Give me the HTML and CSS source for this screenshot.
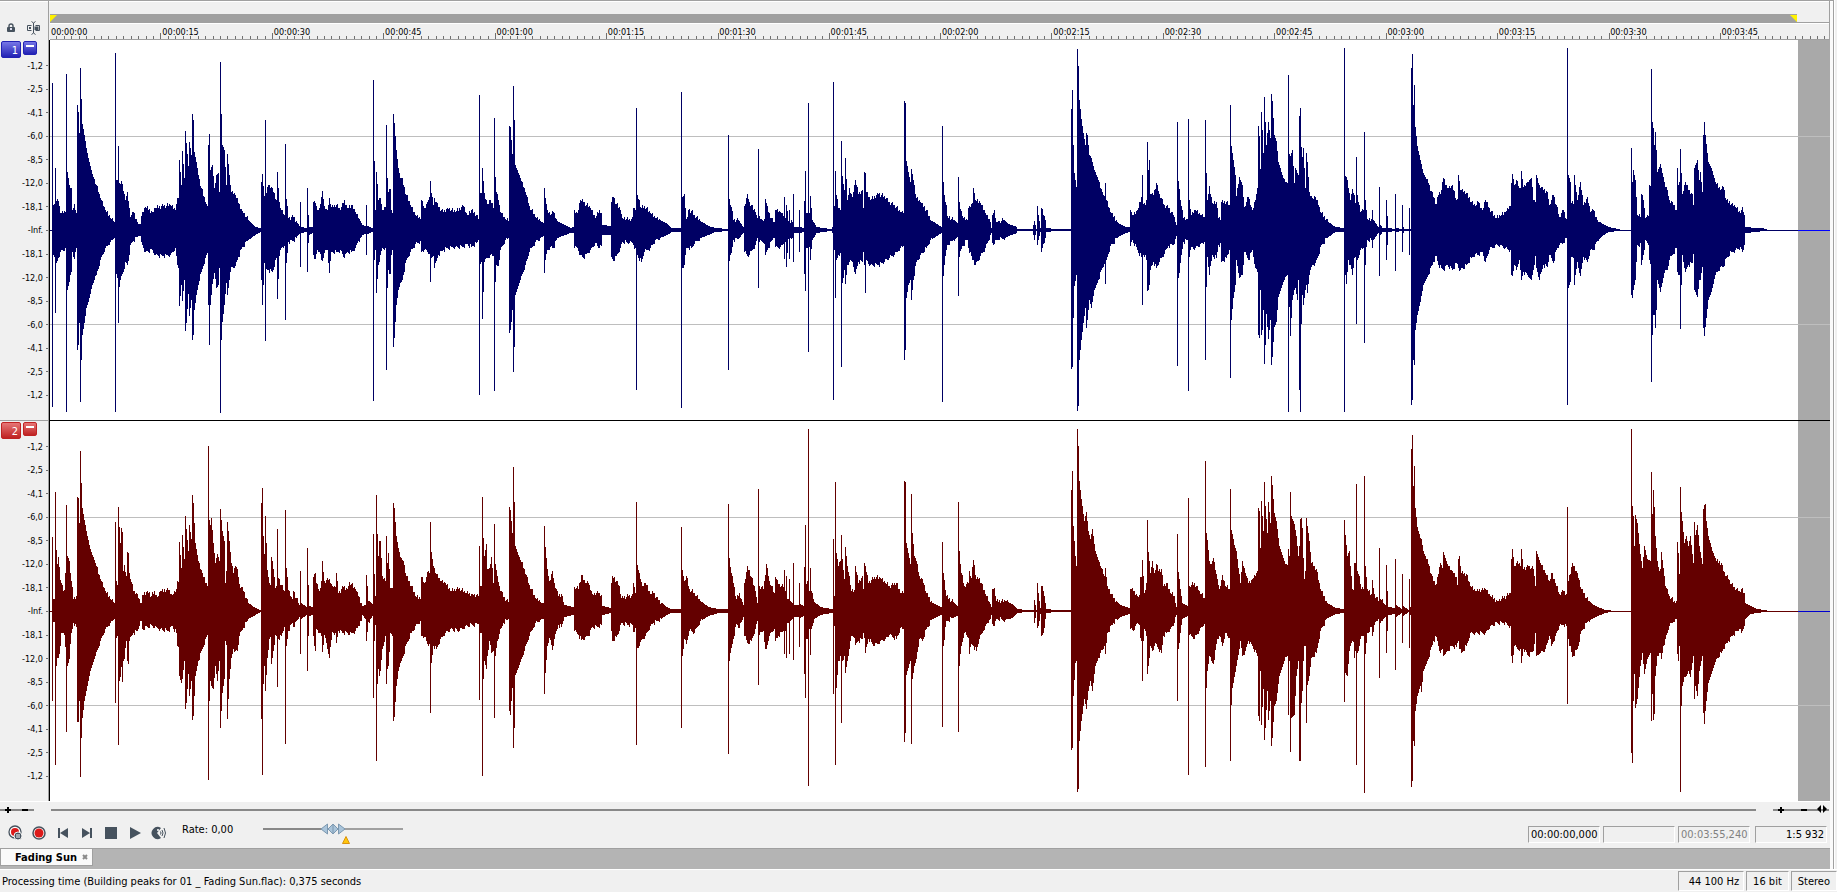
FILE: index.html
```html
<!DOCTYPE html>
<html lang="en">
<head>
    <meta charset="UTF-8">
    <meta name="viewport" content="width=device-width, initial-scale=1.0">
    <title>Fading Sun</title>
    <link rel="stylesheet" href="styles.css">
</head>
<body>
    <div class="workspace">
        <!-- Range bar and time ruler -->
        <div class="header">
            <div class="corner">
                <button class="icon-btn" aria-label="Lock">
                    <svg width="8" height="10" viewBox="0 0 8 10"><path d="M2 5V3a2 2 0 0 1 4 0v2" fill="none" stroke="#46525e" stroke-width="1.4"/><rect y="4" width="8" height="5" rx="1" fill="#46525e"/><rect x="3" y="5" width="2" height="2" fill="#dde"/></svg>
                </button>
                <button class="icon-btn" aria-label="Snapping">
                    <svg width="13" height="14" viewBox="0 0 13 14" fill="none" stroke="#46525e"><path d="M4.500 .500 6.500 2 8.500 .500M6.500 2v10M4.500 13.500 6.500 12 8.500 13.500M4.500 4.500h-4v5h4M8.500 4.500h4v5h-4"/><path d="M3 6v2M8.500 5.500v3.500M10.500 5.500v3.500" stroke-width="2"/></svg>
                </button>
            </div>
            <div class="timeline">
                <div class="range">
                    <div class="range-bar">
                        <svg width="7" height="7"><path d="M0 0h7L0 7z" fill="#fff200"/></svg>
                        <svg width="7" height="7"><path d="M0 0h7v7z" fill="#fff200"/></svg>
                    </div>
                </div>
                <div class="ruler">
                    <div class="ruler-labels">
                        <span>00:00:00</span><span>00:00:15</span><span>00:00:30</span><span>00:00:45</span>
                        <span>00:01:00</span><span>00:01:15</span><span>00:01:30</span><span>00:01:45</span>
                        <span>00:02:00</span><span>00:02:15</span><span>00:02:30</span><span>00:02:45</span>
                        <span>00:03:00</span><span>00:03:15</span><span>00:03:30</span><span>00:03:45</span>
                    </div>
                    <svg class="ticks" viewBox="0 0 1780 7" preserveAspectRatio="none"><path id="ticks"/></svg>
                </div>
            </div>
        </div>

        <!-- Channel 1 -->
        <div class="track left">
            <div class="gutter">
                <div class="badges">
                    <button class="badge">1</button>
                    <button class="badge small" aria-label="Collapse channel 1"></button>
                </div>
                <ol class="scale">
                    <li>-1,2</li><li>-2,5</li><li>-4,1</li><li>-6,0</li><li>-8,5</li><li>-12,0</li><li>-18,1</li>
                    <li>-Inf.</li>
                    <li>-18,1</li><li>-12,0</li><li>-8,5</li><li>-6,0</li><li>-4,1</li><li>-2,5</li><li>-1,2</li>
                </ol>
            </div>
            <div class="wave">
                <svg viewBox="50 -190 1780 380" preserveAspectRatio="none">
                    <rect class="past-end" x="1798" y="-190" width="32" height="380"/>
                    <path class="grid" d="M50-94h1780v1H50zM50 94h1780v1H50z"/>
                    <path class="zero" d="M50 0h1780v1H50z"/>
                    <path class="peaks" id="peaks1"/>
                </svg>
            </div>
        </div>

        <!-- Channel 2 -->
        <div class="track right">
            <div class="gutter">
                <div class="badges">
                    <button class="badge">2</button>
                    <button class="badge small" aria-label="Collapse channel 2"></button>
                </div>
                <ol class="scale">
                    <li>-1,2</li><li>-2,5</li><li>-4,1</li><li>-6,0</li><li>-8,5</li><li>-12,0</li><li>-18,1</li>
                    <li>-Inf.</li>
                    <li>-18,1</li><li>-12,0</li><li>-8,5</li><li>-6,0</li><li>-4,1</li><li>-2,5</li><li>-1,2</li>
                </ol>
            </div>
            <div class="wave">
                <svg viewBox="50 -190 1780 380" preserveAspectRatio="none">
                    <rect class="past-end" x="1798" y="-190" width="32" height="380"/>
                    <path class="grid" d="M50-94h1780v1H50zM50 94h1780v1H50z"/>
                    <path class="zero" d="M50 0h1780v1H50z"/>
                    <path class="peaks" id="peaks2"/>
                </svg>
            </div>
        </div>

        <!-- Zoom and scroll -->
        <div class="zoom-row">
            <div class="zoom">
                <button class="icon-btn" aria-label="Zoom in vertically"><svg width="17" height="10"><path d="M5 5h6M8 2v6" stroke="#000" stroke-width="2"/></svg></button>
                <button class="icon-btn" aria-label="Zoom out vertically"><svg width="17" height="10"><path d="M5 5h6" stroke="#000" stroke-width="2"/></svg></button>
            </div>
            <div class="scroll"></div>
            <div class="zoom">
                <button class="icon-btn" aria-label="Zoom in"><svg width="17" height="10"><path d="M5 5h6M8 2v6" stroke="#000" stroke-width="2"/></svg></button>
                <button class="icon-btn" aria-label="Zoom out"><svg width="27" height="10"><path d="M11 5h6" stroke="#000" stroke-width="2"/></svg></button>
                <button class="icon-btn" aria-label="Zoom to fit"><svg width="12" height="10"><path d="M4 0v8L0 4zM6 0v8l4-4z"/></svg></button>
            </div>
        </div>

        <!-- Transport -->
        <div class="transport">
            <div class="buttons">
                <button class="icon-btn" aria-label="Record with timer"><svg width="16" height="16"><circle cx="8" cy="7" r="6" fill="#fff" stroke="#46525e" stroke-width="1.300"/><circle cx="8" cy="7" r="4" fill="#dc1a1a"/><circle cx="11" cy="11" r="4" fill="#46525e" stroke="#f0f0f0"/><path d="M10 9v4M12 9v4" stroke="#fff"/></svg></button>
                <button class="icon-btn" aria-label="Record"><svg width="16" height="16"><circle cx="8" cy="8" r="6" fill="#fff" stroke="#46525e" stroke-width="1.500"/><circle cx="8" cy="8" r="4.500" fill="#dc1a1a"/></svg></button>
                <button class="icon-btn" aria-label="Go to start"><svg width="16" height="16" fill="#46525e"><path d="M3 3h2v10H3zM13 3v10L5 8z"/></svg></button>
                <button class="icon-btn" aria-label="Go to end"><svg width="16" height="16" fill="#46525e"><path d="M11 3h2v10h-2zM3 3v10l8-5z"/></svg></button>
                <button class="icon-btn" aria-label="Stop"><svg width="16" height="16" fill="#46525e"><path d="M2 2h12v12H2z"/></svg></button>
                <button class="icon-btn" aria-label="Play"><svg width="16" height="16" fill="#46525e"><path d="M3 2v12l11-6z"/></svg></button>
                <button class="icon-btn" aria-label="Scrub"><svg width="16" height="16"><path d="M10 3A6 6 0 1 0 10 13L6 8z" fill="#46525e"/><circle cx="7" cy="5" r="1" fill="#fff"/><path d="M9.500 6.500q1 1.500 0 3M11 5q2 3 0 6M13 3q3 5 0 10" fill="none" stroke="#46525e"/></svg></button>
            </div>
            <label class="rate" for="rate">Rate: 0,00</label>
            <div class="rate-slider">
                <input type="range" id="rate" min="-100" max="100" value="0">
                <svg class="rate-mark" width="8" height="8"><path d="M4 .500 7.500 7.500h-7z" fill="#ffc60a" stroke="#d9930f"/></svg>
            </div>
            <div class="times">
                <output>00:00:00,000</output>
                <output></output>
                <output class="dim">00:03:55,240</output>
                <output class="ratio">1:5 932</output>
            </div>
        </div>

        <div class="tabs">
            <div class="tab">
                <a href="#">Fading Sun</a>
                <button class="icon-btn" aria-label="Close tab"><svg width="6" height="6"><path d="M1 1l4 4M5 1 1 5" stroke="#8a8a8a" stroke-width="2"/></svg></button>
            </div>
        </div>
    </div>

    <div class="status">
        <div class="message">Processing time (Building peaks for 01 _ Fading Sun.flac): 0,375 seconds</div>
        <div class="cell rate-cell">44 100 Hz</div>
        <div class="cell">16 bit</div>
        <div class="cell">Stereo</div>
    </div>

    <script src="script.js"></script>
</body>
</html>
```
FILE: styles.css
```css
* {
    box-sizing: border-box;
}
body {
    margin: 0;
    min-height: 100vh;
    display: flex;
    flex-direction: column;
    background-color: #f0f0f0;
    color: #000;
    font-family: "DejaVu Sans Condensed", "Noto Sans", sans-serif;
    font-size: 11px;
}
button {
    font: inherit;
    color: inherit;
    cursor: pointer;
}
svg {
    display: block;
}
.icon-btn {
    padding: 0;
    border: none;
    background: none;
}
.workspace {
    flex: 1;
    display: flex;
    flex-direction: column;
    margin-right: 3px;
    padding-right: 3px;
    border-right: 1px solid #a0a0a0;
    border-top: 1px solid #a0a0a0;
    box-shadow: inset 0 1px #fff, 1px 0 #fff, inset -3px 0 #fafafa;
}

/* header */
.header {
    display: flex;
    height: 39px;
    flex: none;
}
.corner {
    width: 49px;
    flex: none;
    display: flex;
    align-items: center;
    justify-content: space-between;
    padding: 14px 8px 0 7px;
    border-right: 1px solid #a0a0a0;
}
.timeline {
    flex: 1;
    padding-left: 1px;
    border-right: 1px solid #a0a0a0;
}
.range {
    height: 22px;
    padding-top: 13px;
    border-bottom: 1px solid #a0a0a0;
}
.range-bar {
    display: flex;
    justify-content: space-between;
    width: 98.2%;
    height: 9px;
    padding-top: 1px;
    background-color: #a0a0a0;
}
.ruler {
    display: flex;
    flex-direction: column;
    justify-content: space-between;
    height: 17px;
    border-top: 1px solid #fff;
}
.ruler-labels {
    display: grid;
    grid-template-columns: repeat(15, 150fr) 146fr;
    height: 9px;
    font-size: 9px;
    line-height: 17px;
}
.ruler-labels span {
    padding-left: 1px;
}
.ticks {
    width: 100%;
    height: 7px;
    fill: #707070;
    border-bottom: 1px solid #a0a0a0;
    shape-rendering: crispEdges;
}

/* tracks */
.track {
    flex: 1;
    display: flex;
    min-height: 200px;
}
.track + .track .gutter {
    border-top: 1px solid #a0a0a0;
}
.track + .track .wave {
    border-top: 1px solid #000;
}
.left {
    --peaks: #000064;
    --zero: #0000ff;
    --light: #7676e6;
    --dark: #2222b4;
}
.right {
    --peaks: #640000;
    --zero: #0000d0;
    --light: #e67676;
    --dark: #bf2222;
}
.gutter {
    position: relative;
    width: 49px;
    flex: none;
    border-right: 1px solid #a0a0a0;
}
.badges {
    position: absolute;
    top: 1px;
    left: 1px;
    display: flex;
    align-items: flex-start;
    gap: 2px;
}
.badge {
    width: 20px;
    height: 17px;
    padding: 0 2px 0 0;
    text-align: right;
    line-height: 17px;
    color: #fff;
    background: linear-gradient(var(--light), var(--dark));
    border: 1px solid var(--dark);
    border-radius: 2px;
}
.badge.small {
    width: 14px;
    height: 14px;
    padding: 0;
}
.badge.small::before {
    content: "";
    display: block;
    width: 8px;
    height: 2px;
    margin: 0 auto 5px;
    background-color: #fff;
}
.scale {
    display: flex;
    flex-direction: column;
    height: 100%;
    margin: 0;
    padding: 14px 0 13px;
    list-style: none;
    font-size: 9px;
}
.scale li {
    flex: 1;
    display: flex;
    align-items: center;
    justify-content: flex-end;
    gap: 3px;
}
.scale li::after {
    content: "";
    width: 2px;
    height: 1px;
    background-color: #707070;
}
.wave {
    flex: 1;
    position: relative;
    background-color: #fff;
    border-left: 1px solid #000;
}
.wave svg {
    position: absolute;
    width: 100%;
    height: 100%;
    shape-rendering: crispEdges;
}
.past-end {
    fill: #a9a9a9;
}
.grid {
    fill: #bebebe;
}
.zero {
    fill: var(--zero);
}
.peaks {
    fill: var(--peaks);
}

/* zoom and scroll */
.zoom-row {
    display: flex;
    align-items: center;
    height: 17px;
    flex: none;
    padding-right: 1px;
    border-top: 1px solid #fff;
}
.zoom {
    display: flex;
    background: linear-gradient(#888, #888) center / 100% 2px no-repeat;
}
.scroll {
    flex: 1;
    height: 2px;
    margin: 0 17px;
    background-color: #888;
}

/* transport */
.transport {
    display: flex;
    height: 30px;
    flex: none;
    padding: 0 3px 0 7px;
}
.buttons {
    display: flex;
    gap: 8px;
    padding-top: 7px;
    align-items: flex-start;
}
.rate {
    width: 81px;
    margin-left: 15px;
    padding-top: 5px;
}
.rate-slider {
    position: relative;
    width: 140px;
    height: 20px;
}
.rate-slider input {
    appearance: none;
    display: block;
    width: 100%;
    height: 12px;
    margin: 5px 0 0;
    background: linear-gradient(90deg, #888 50%, #a0a0a0 50%) center / 100% 2px no-repeat;
}
.rate-slider input::-webkit-slider-thumb {
    appearance: none;
    width: 26px;
    height: 12px;
    background: url("data:image/svg+xml,%3Csvg xmlns='http://www.w3.org/2000/svg' width='26' height='12' fill='%23a9c4da' stroke='%237c98b0'%3E%3Cpath d='M7.500 1v10L1 6zM18.500 1v10L25 6zM13 1 8 6l5 5 5-5zM13 1v10'/%3E%3C/svg%3E");
}
.rate-mark {
    position: absolute;
    left: 79px;
    top: 18px;
}
.times {
    display: flex;
    gap: 3px;
    margin-left: auto;
    padding-top: 8px;
}
.times output {
    width: 72px;
    height: 17px;
    padding: 0 2px;
    line-height: 16px;
    border: 1px solid;
    border-color: #a0a0a0 #fff #fff #a0a0a0;
}
.times .dim {
    color: #808080;
}
.times .ratio {
    margin-left: 2px;
    text-align: right;
}

/* tabs */
.tabs {
    display: flex;
    height: 21px;
    flex: none;
    padding-bottom: 2px;
    background-color: #b4b4b4;
    border-top: 1px solid #a0a0a0;
}
.tab {
    display: flex;
    align-items: center;
    gap: 5px;
    height: 17px;
    padding: 0 4px 0 14px;
    background-color: #fafafa;
    border: 1px solid #a0a0a0;
    border-top: none;
}
.tab a {
    color: #000;
    font-weight: bold;
    text-decoration: none;
}

/* status bar */
.status {
    display: flex;
    gap: 2px;
    height: 23px;
    flex: none;
    padding: 1px 0;
    border-top: 1px solid #fff;
}
.message {
    flex: 1;
    padding-left: 2px;
    line-height: 22px;
}
.cell {
    min-width: 42px;
    padding: 0 6px;
    line-height: 20px;
    border: 1px solid;
    border-color: #a0a0a0 #fff #fff #a0a0a0;
}
.rate-cell {
    width: 66px;
    padding: 0 4px;
    text-align: right;
}
```
FILE: script.js
```js
// peak envelopes: x:up/down
const channel1 = `52:147/177 53:25/25 55:62/83 56:29/33 58:29/28 60:17/22 65:18/18 66:156/182 67:58/60 69:45/52 71:42/42 72:20/22 74:26/29 76:17/18 77:125/120
78:118/115 79:97/93 80:162/172 81:131/130 82:106/105 84:95/93 86:82/78 88:72/72 92:56/55 96:45/45 100:32/30 105:20/18 110:12/12 114:8/8
115:177/182 116:50/44 117:50/48 118:84/93 119:47/57 121:49/46 123:39/42 125:30/32 127:38/35 129:22/25 130:13/15 133:18/11 138:6/6 141:14/12
145:23/22 152:18/20 155:22/25 163:24/26 170:25/25 175:20/18 177:32/35 178:32/38 179:70/76 181:45/55 182:79/71 184:52/50 185:99/101 186:87/93
188:64/64 189:88/86 191:75/70 192:116/110 193:110/105 194:78/80 196:68/65 198:55/55 201:42/42 205:28/28 207:24/23 208:85/75 209:96/115
210:60/75 212:65/54 214:42/43 216:55/58 218:57/55 219:38/38 220:168/183 221:116/110 222:85/92 224:80/75 226:45/53 227:76/65 229:55/50
231:38/37 235:35/36 238:27/27 242:19/17 248:10/10 255:3/5 260:2/2 261:48/50 262:56/75 264:34/33 265:110/111 266:37/39 268:45/40 272:42/42
276:30/28 277:58/69 279:28/26 281:20/18 284:15/16 285:86/90 286:31/33 288:12/12 293:13/11 299:4/4 300:28/37 301:3/3 306:2/2 307:42/42
308:15/13 309:3/5 312:3/3 313:28/25 315:27/29 317:20/20 319:22/22 321:33/30 322:39/31 324:24/23 327:20/20 329:32/43 331:23/22 336:25/22
340:20/20 344:30/28 347:22/22 351:25/22 355:18/18 358:12/11 362:5/5 365:4/4 366:25/25 367:4/4 372:2/2 373:150/171 374:69/30 375:20/20
376:58/63 378:30/35 380:32/25 382:20/18 385:23/18 386:105/140 387:52/58 388:38/40 390:41/44 391:20/25 392:17/20 393:116/117 394:107/108
396:80/75 398:62/60 400:52/53 402:52/50 403:45/45 406:35/30 410:25/22 415:15/14 420:11/11 421:30/22 424:22/20 427:28/22 429:33/24 430:49/52
431:37/28 433:25/26 434:32/38 438:23/25 443:18/20 447:22/18 455:18/17 463:24/17 467:15/14 471:20/17 476:15/13 478:11/10 479:135/165
480:37/34 481:37/32 482:62/89 484:37/32 487:26/28 490:30/25 493:22/26 494:112/161 495:53/52 496:38/35 498:30/36 500:18/20 505:11/10 508:9/8
509:104/103 510:103/100 511:90/92 512:76/80 513:144/142 514:110/117 515:65/65 520:52/50 525:38/35 529:24/22 535:13/12 541:8/7 543:7/6
544:42/43 545:32/30 547:20/20 550:15/17 553:18/18 557:9/8 562:6/6 570:2/3 573:3/3 574:20/18 577:17/18 580:30/25 583:28/28 590:22/20
595:12/13 599:20/18 601:17/16 602:5/5 610:4/5 611:28/27 613:33/31 616:26/26 620:20/18 622:12/12 629:11/13 633:22/15 635:20/18 636:122/160
637:35/25 641:22/32 644:24/22 650:17/18 655:12/10 660:10/8 667:6/5 671:2/2 680:2/2 681:138/178 682:33/38 684:36/35 686:11/18 688:20/18
691:19/18 694:15/14 700:9/8 708:4/5 715:2/2 727:1/1 728:95/140 729:31/31 731:23/23 733:10/10 738:10/9 743:3/3 744:24/22 747:36/26 749:28/25
755:18/15 757:12/8 758:81/58 759:14/12 762:10/12 765:31/25 768:18/18 773:8/8 775:20/17 780:18/17 783:14/14 784:33/29 785:12/12 786:25/37
788:9/9 789:20/29 790:7/8 791:10/9 792:8/8 793:36/32 794:3/3 798:3/3 799:20/22 800:3/3 803:2/2 804:29/44 805:59/61 806:17/18 807:17/18
808:127/122 809:17/17 810:34/30 812:10/10 816:3/3 822:2/2 831:1/1 832:3/3 833:148/170 834:24/20 835:59/68 836:35/30 838:22/25 840:20/23
841:89/137 842:54/53 844:40/40 845:72/54 847:30/35 849:42/32 852:33/32 855:50/44 858:36/32 862:40/32 863:22/22 864:58/35 865:57/63
866:38/30 870:30/35 878:36/35 884:34/32 889:28/28 894:25/25 900:18/18 903:17/16 904:129/130 905:127/120 906:69/68 908:58/55 910:48/50
911:61/70 913:50/50 916:32/32 920:28/25 926:20/18 930:10/10 935:7/7 941:3/3 942:104/172 943:48/46 944:35/35 946:25/20 947:14/15 953:10/10
957:7/7 958:53/66 959:28/27 962:14/16 967:10/10 968:22/18 972:27/30 973:42/30 975:30/35 980:27/26 985:17/18 990:8/5 991:2/3 992:15/13
994:20/14 996:8/10 1003:10/9 1010:5/5 1015:4/4 1017:1/1 1032:1/1 1033:5/5 1034:9/10 1035:5/5 1036:1/1 1037:24/15 1038:15/10 1040:2/2
1041:22/22 1043:15/14 1045:10/8 1046:2/2 1055:1/1 1070:1/1 1071:121/139 1072:140/137 1073:85/88 1074:57/56 1076:43/45 1077:181/181
1078:164/176 1079:130/130 1081:111/110 1083:97/93 1085:85/78 1086:97/98 1087:95/90 1089:75/70 1091:72/78 1094:60/60 1098:50/50 1102:38/38
1104:34/34 1105:47/54 1106:30/30 1110:18/16 1118:7/7 1125:3/3 1129:3/2 1130:20/16 1132:15/10 1137:20/20 1141:33/27 1142:55/75 1143:26/25
1145:25/25 1146:30/30 1147:88/61 1148:60/60 1149:70/55 1150:36/40 1153:35/32 1156:47/38 1159:36/32 1164:25/24 1168:22/16 1173:15/15
1176:5/6 1177:108/136 1178:49/48 1180:30/33 1183:12/12 1187:11/10 1188:111/161 1189:30/27 1191:15/17 1195:20/18 1200:15/14 1204:13/12
1205:110/130 1206:57/57 1207:30/27 1209:44/45 1212:27/25 1216:28/28 1218:12/15 1221:28/32 1226:28/28 1229:25/20 1230:125/148 1231:84/90
1233:70/68 1235:55/55 1236:34/30 1239:53/48 1242:45/45 1244:23/22 1248:33/30 1252:20/20 1255:30/38 1257:42/42 1258:104/105 1259:94/108
1260:61/60 1261:118/105 1262:100/100 1263:77/80 1264:133/134 1265:108/115 1266:85/84 1268:108/109 1270:92/90 1271:136/135 1272:129/127
1274:95/97 1276:89/92 1278:68/67 1283:52/52 1287:47/45 1288:155/182 1289:76/77 1290:74/106 1292:80/70 1294:47/60 1295:62/58 1297:57/70
1298:55/50 1299:114/160 1300:122/182 1301:83/94 1302:73/65 1303:82/75 1305:42/60 1306:77/55 1307:68/63 1309:38/45 1312:32/35 1315:33/33
1318:25/26 1321:17/15 1328:8/7 1335:3/2 1343:2/2 1344:182/182 1345:54/45 1346:53/54 1348:42/30 1350:30/35 1352:41/45 1354:35/28 1355:27/27
1356:73/94 1357:35/30 1360:18/20 1363:20/18 1364:98/113 1365:30/35 1366:20/17 1367:11/10 1371:11/10 1372:20/18 1373:10/10 1378:3/3
1379:43/46 1380:5/5 1382:2/2 1385:2/2 1386:30/30 1387:14/15 1388:2/2 1394:1/1 1395:36/41 1396:2/2 1401:1/1 1402:25/22 1403:3/3 1404:1/1
1408:1/1 1409:22/25 1410:1/1 1411:162/175 1412:176/170 1413:125/130 1414:145/135 1415:103/100 1417:84/85 1420:70/72 1423:57/55 1428:47/45
1433:33/32 1436:26/26 1438:35/35 1441:40/38 1443:52/40 1447:42/35 1452:45/40 1456:30/33 1457:31/34 1458:55/38 1460:40/40 1466:37/35
1471:28/28 1475:24/24 1478:28/25 1482:20/22 1485:30/32 1489:22/20 1495:12/15 1500:14/15 1505:18/18 1510:24/20 1511:47/45 1512:56/46
1514:45/35 1516:50/40 1519:42/30 1520:42/40 1521:59/50 1523:43/42 1527:48/45 1531:52/50 1533:30/40 1535:28/26 1536:55/38 1539:45/50
1543:40/35 1547:38/37 1549:25/25 1553:35/33 1556:25/20 1559:13/15 1563:20/13 1566:11/8 1567:182/175 1568:55/58 1570:48/52 1571:27/27
1574:55/55 1577:30/32 1580:48/46 1583:25/27 1587:33/32 1590:18/20 1593:20/20 1597:10/11 1602:6/6 1608:3/2 1618:1/1 1620:0/0 1630:0/0
1631:82/65 1632:48/68 1633:60/60 1635:50/50 1637:15/15 1641:36/35 1643:30/25 1645:12/10 1648:14/15 1649:45/30 1650:44/34 1651:161/152
1652:108/105 1653:102/85 1654:85/85 1655:98/98 1656:80/80 1657:58/50 1660:66/62 1664:48/43 1667:40/40 1669:30/30 1672:28/25 1676:20/18
1677:62/42 1678:45/45 1679:48/45 1680:81/99 1681:57/55 1682:36/25 1685:48/42 1688:40/35 1692:36/33 1693:25/24 1694:62/60 1697:70/67
1699:50/50 1700:58/50 1702:38/37 1703:95/98 1704:108/106 1705:95/97 1708:68/70 1711:62/62 1715:48/45 1720:40/37 1723:43/37 1726:30/28
1731:26/22 1735:23/20 1740:17/17 1742:23/22 1744:15/15 1745:3/3 1755:2/2 1763:2/1 1764:1/1 1768:0/0 1797:0/0`;

const channel2 = `52:74/90 53:12/11 54:12/11 55:119/154 56:61/55 57:47/47 58:54/47 60:31/35 61:28/22 63:20/22 65:38/36 66:106/121 67:55/55 69:50/48 71:30/22
72:24/18 73:12/12 76:15/16 77:114/111 78:113/111 79:88/90 80:160/166 81:128/127 82:103/107 84:91/90 87:75/75 90:62/60 95:48/45 100:32/30
105:20/18 110:12/12 114:8/8 115:89/92 116:30/27 117:26/25 118:104/134 119:84/70 120:68/66 121:83/56 122:79/71 123:40/50 124:46/48 126:35/30
127:59/50 128:58/53 129:38/30 131:29/25 133:20/22 137:17/20 140:8/10 142:16/18 147:20/16 151:15/14 154:20/17 157:14/17 160:20/18 168:21/20
172:16/15 176:22/22 177:30/35 179:69/65 181:43/72 182:76/68 184:52/50 185:95/98 186:82/92 188:60/63 189:86/85 191:72/70 192:116/109
193:108/105 195:68/65 198:50/50 202:38/38 207:25/24 208:165/169 209:91/90 210:86/70 211:93/75 213:68/78 215:48/55 217:57/70 219:50/50
220:102/117 222:80/82 224:70/68 225:28/30 226:40/34 227:89/108 229:70/68 231:48/47 233:38/38 235:45/40 237:42/40 239:27/25 243:20/17
248:8/8 255:3/4 260:1/1 261:108/108 262:123/164 263:75/73 264:57/55 265:95/80 267:41/47 269:28/28 271:54/53 273:42/40 275:23/24 276:25/25
277:82/76 278:33/28 281:26/25 284:20/16 285:101/133 286:43/35 288:21/20 292:12/12 293:20/16 299:6/6 300:40/43 301:8/8 306:4/4 307:63/60
308:26/25 309:5/5 312:4/4 313:34/25 315:38/40 316:28/18 319:20/22 321:30/25 322:50/41 324:30/24 329:32/47 332:25/21 335:24/22 336:38/32
338:18/20 343:24/22 347:22/22 349:29/24 355:22/20 358:15/15 361:8/10 362:5/4 365:6/8 366:36/30 368:10/11 372:7/5 373:77/87 374:37/30
375:15/14 376:116/150 377:77/73 378:55/58 379:70/65 380:70/60 382:35/38 385:30/25 386:75/73 387:48/58 388:58/55 390:23/22 392:23/25
393:108/110 394:103/106 396:75/75 398:63/60 400:54/52 403:50/45 406:35/33 411:25/22 415:15/15 420:12/10 421:34/25 424:28/26 428:40/35
429:38/33 430:89/102 431:59/52 433:45/35 436:37/38 440:30/28 445:28/22 450:20/18 459:23/20 465:18/15 472:17/14 478:15/13 479:65/89
480:25/22 481:25/22 482:114/165 483:73/68 484:55/50 486:67/58 487:42/45 489:43/30 491:54/42 493:28/40 494:87/107 495:47/45 497:35/30
499:25/23 503:14/12 508:9/8 509:104/100 510:101/104 511:90/90 512:78/77 513:144/137 514:109/117 515:65/64 518:56/57 524:42/40 529:26/25
535:13/12 541:8/8 543:8/8 544:85/83 545:64/62 547:42/35 549:30/27 552:40/39 554:28/28 558:15/14 561:17/16 564:6/6 573:4/4 574:24/20
578:22/24 581:36/29 585:28/26 588:28/25 592:17/16 598:18/16 601:16/14 602:5/4 610:3/2 611:28/20 612:35/30 616:30/26 619:25/20 621:13/12
628:15/14 633:28/21 635:18/17 636:109/134 637:46/37 639:38/35 642:25/28 645:28/25 650:17/15 653:18/12 658:11/10 665:5/5 670:2/2 680:2/2
681:84/117 682:41/45 684:30/28 686:35/33 689:22/20 694:18/22 700:10/10 708:4/5 718:2/2 727:2/2 728:107/143 729:53/50 731:38/37 733:28/28
736:12/13 739:18/17 743:6/6 744:28/25 747:45/32 751:34/30 755:20/18 757:8/10 758:122/74 759:25/24 763:22/20 765:36/38 766:47/38 769:30/25
774:18/18 775:34/30 778:27/25 783:24/20 784:41/43 785:20/20 786:35/47 787:12/12 788:12/12 789:32/43 790:10/10 792:8/8 793:48/49 794:6/6
798:6/6 799:28/36 800:7/7 803:5/5 804:44/63 805:86/87 806:27/28 807:30/28 808:182/175 809:20/18 810:43/44 811:20/18 814:9/8 820:4/4
825:3/3 832:2/2 833:72/83 834:15/15 835:129/154 836:58/77 838:45/50 840:50/45 841:76/112 842:52/50 844:32/45 845:64/62 847:45/50 849:35/38
851:20/25 855:45/34 858:28/30 862:35/28 863:22/22 864:48/27 865:45/42 868:28/28 874:34/35 880:33/30 885:28/28 889:25/24 896:28/28 900:18/17
903:18/18 904:130/131 905:129/122 906:68/64 909:53/53 910:47/50 911:117/133 912:78/68 914:55/55 916:50/48 919:35/28 922:32/30 926:18/18
932:8/8 941:4/4 942:69/116 943:38/35 946:15/10 957:5/5 958:109/121 959:60/55 961:38/35 964:25/22 968:28/27 969:40/43 971:33/33 973:51/35
976:32/40 979:33/28 985:17/15 990:7/8 991:4/4 992:22/13 994:23/15 996:10/8 1005:10/9 1012:7/7 1017:2/2 1025:1/1 1032:1/1 1034:11/12
1036:1/1 1037:28/17 1039:10/10 1040:3/3 1041:25/25 1043:20/22 1045:8/8 1046:2/2 1055:1/1 1070:1/1 1071:121/139 1072:140/137 1073:85/85
1075:55/52 1076:45/50 1077:182/181 1078:165/178 1079:130/130 1081:112/110 1084:90/88 1086:99/98 1088:80/80 1090:72/70 1092:82/80 1095:60/55
1100:45/42 1104:35/35 1105:43/43 1107:25/22 1113:13/12 1120:6/6 1129:3/3 1130:22/18 1134:20/19 1137:15/12 1140:34/27 1141:34/30 1142:51/70
1143:35/30 1144:18/18 1146:28/25 1147:91/63 1148:59/55 1150:38/35 1152:50/40 1154:38/35 1156:47/33 1158:40/38 1161:42/42 1163:25/25
1166:28/22 1170:18/18 1174:15/12 1176:4/4 1177:77/90 1178:39/38 1180:22/22 1182:8/8 1187:5/5 1188:113/164 1189:25/24 1194:28/28 1199:20/20
1204:13/13 1205:150/156 1206:78/77 1207:71/60 1209:50/45 1211:47/50 1213:53/53 1217:32/28 1219:22/25 1222:36/35 1225:25/22 1229:22/27
1230:122/150 1231:81/94 1232:77/77 1234:66/66 1236:60/55 1240:28/30 1242:50/45 1245:38/40 1248:28/30 1252:32/35 1257:40/45 1258:103/105
1259:100/110 1260:63/60 1261:110/114 1263:80/78 1264:129/129 1265:105/117 1267:78/80 1268:109/109 1270:88/90 1271:135/135 1272:126/127
1274:98/95 1276:90/90 1279:65/65 1284:50/50 1287:46/45 1288:62/104 1289:55/50 1290:119/141 1291:95/107 1294:87/104 1296:75/65 1298:55/50
1299:65/150 1300:92/150 1301:93/92 1302:83/80 1303:53/50 1304:32/35 1305:40/35 1306:93/112 1307:85/74 1309:70/65 1311:48/47 1316:42/42
1320:22/20 1327:8/7 1335:3/3 1343:2/2 1344:91/91 1345:76/62 1347:55/65 1349:60/40 1352:22/30 1354:48/47 1355:48/40 1356:127/154 1357:40/42
1359:35/35 1361:22/25 1363:22/25 1364:135/182 1365:45/43 1367:22/22 1371:17/16 1372:31/25 1374:17/14 1378:10/8 1379:63/67 1380:12/12
1385:6/6 1386:46/42 1387:20/20 1388:4/4 1394:3/3 1395:52/59 1396:6/6 1401:2/2 1402:37/32 1403:5/5 1408:1/1 1409:32/37 1410:4/4 1411:162/176
1412:176/170 1413:125/130 1414:145/135 1415:103/100 1417:84/85 1420:73/75 1421:72/81 1423:60/60 1428:47/48 1433:30/30 1436:27/26 1440:48/42
1442:43/38 1443:59/45 1447:47/40 1452:40/35 1456:34/36 1457:26/32 1458:52/30 1459:55/38 1461:38/42 1466:37/35 1470:25/22 1475:20/22
1485:22/22 1490:15/15 1497:10/12 1503:13/12 1510:18/15 1511:52/45 1512:62/52 1514:45/35 1517:50/38 1520:45/38 1521:62/52 1523:42/38
1528:45/45 1533:42/40 1535:25/22 1536:60/45 1540:48/42 1545:38/38 1549:30/25 1551:38/35 1555:28/25 1559:17/15 1563:20/14 1566:17/15
1567:104/93 1568:30/28 1572:48/46 1577:38/38 1581:22/20 1588:10/10 1595:5/6 1605:1/2 1615:0/0 1630:0/0 1631:182/142 1632:105/152 1633:95/90
1634:65/63 1635:96/97 1637:88/88 1640:57/55 1642:43/42 1644:65/63 1647:52/48 1650:50/42 1651:139/110 1652:97/83 1653:121/109 1654:104/103
1655:75/65 1657:50/45 1659:40/42 1660:42/42 1661:59/48 1663:43/35 1665:25/28 1669:15/15 1675:8/8 1676:10/8 1677:69/43 1678:58/50 1679:37/35
1680:124/181 1681:99/95 1682:90/75 1684:68/66 1686:75/65 1688:65/60 1690:75/66 1693:48/45 1694:89/88 1695:76/75 1697:86/85 1699:65/60
1702:47/45 1703:102/102 1704:106/113 1705:107/100 1706:90/90 1708:75/72 1712:60/60 1716:50/48 1721:48/42 1723:40/38 1728:32/30 1733:24/24
1739:20/18 1741:22/22 1744:18/15 1745:8/8 1750:5/3 1757:2/2 1764:1/1 1768:0/0 1797:0/0`;

function drawPeaks(id, data) {
    const points = data.split(/\s+/).map(p => p.split(/[:/]/).map(Number));
    let d = 'M50 0h2v1h-2z';
    for (let i = 0; i < points.length; i++) {
        const [x0, up0, down0] = points[i];
        const [x1, up1, down1] = points[i + 1] || [x0 + 1, 0, 0];
        const attack = up1 > up0 * 1.8;
        for (let x = x0; x < x1; x++) {
            // hold the level until a sharp attack, otherwise slide to the next point
            const t = attack ? 0 : (x - x0) / (x1 - x0);
            let up = up0 + (up1 - up0) * t;
            let down = down0 + (down1 - down0) * t;
            // small ripple between the points of the quieter parts
            if (x > x0 && up > 9 && up < 50) {
                up += (x * 7 % 5) - 2;
                down += (x * 11 % 5) - 2;
            }
            up = Math.round(up);
            down = Math.max(Math.round(down), 1);
            d += `M${x} ${-up}h1v${up + down}h-1z`;
        }
    }
    document.getElementById(id).setAttribute('d', d);
}

function drawTicks() {
    let d = '';
    for (let s = 0; s < 240; s++) {
        const x = Math.round(s * 7.433) - 1;
        const h = s % 15 === 0 ? 7 : 3;
        d += `M${x} ${7 - h}h1v${h}h-1z`;
    }
    document.getElementById('ticks').setAttribute('d', d);
}

drawPeaks('peaks1', channel1);
drawPeaks('peaks2', channel2);
drawTicks();
```
